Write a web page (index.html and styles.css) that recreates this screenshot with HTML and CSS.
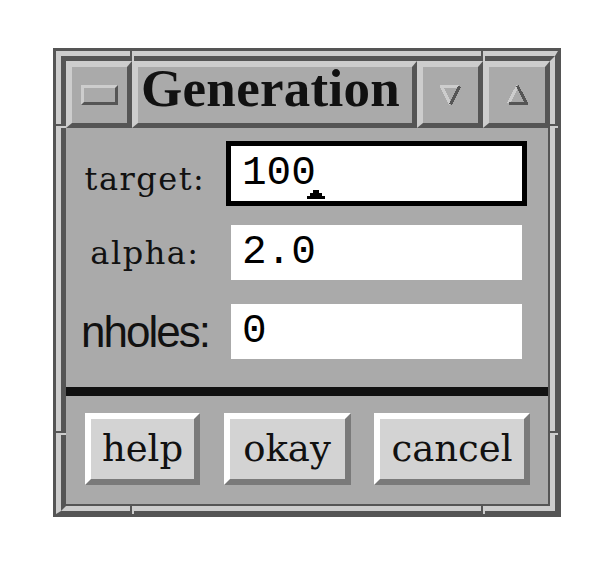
FILE: index.html
```html
<!DOCTYPE html>
<html lang="en">
<head>
    <meta charset="UTF-8">
    <title>Generation</title>
    <link rel="stylesheet" href="styles.css">
</head>
<body>

    <div class="win">
        <div class="bevel-out">
            <div class="bevel-in">
                <div class="titlebar">
                    <div class="tbtn menu-btn"><span class="menu-icon"></span></div>
                    <div class="tbtn title">Generation</div>
                    <div class="tbtn min-btn">
                        <svg width="21" height="20" viewBox="0 0 21 20" shape-rendering="crispEdges">
                            <rect x="0" y="0" width="19" height="3" fill="#cdcdcd"/>
                            <line x1="1.5" y1="1.5" x2="10.5" y2="19.5" stroke="#cdcdcd" stroke-width="3"/>
                            <line x1="19.5" y1="1.5" x2="10.5" y2="19.5" stroke="#555" stroke-width="3"/>
                        </svg>
                    </div>
                    <div class="tbtn max-btn">
                        <svg width="21" height="20" viewBox="0 0 21 20" shape-rendering="crispEdges">
                            <line x1="10.5" y1="1" x2="1.5" y2="18.5" stroke="#cdcdcd" stroke-width="3"/>
                            <line x1="10.5" y1="1" x2="19.5" y2="18.5" stroke="#555" stroke-width="3"/>
                            <rect x="2" y="17" width="19" height="3" fill="#555"/>
                        </svg>
                    </div>
                </div>

                <div class="client">
                    <div class="form">
                        <div class="row">
                            <label class="lbl lbl-low">target:</label>
                            <div class="field focus">
                                <div class="entry">100</div>
                                <svg class="caret" width="18" height="9" viewBox="0 0 18 9" shape-rendering="crispEdges">
                                    <polygon points="6,0 12,0 12,3 15,3 15,6 18,6 18,9 0,9 0,6 3,6 3,3 6,3" fill="#000"/>
                                </svg>
                            </div>
                        </div>
                        <div class="row">
                            <label class="lbl lbl-mid">alpha:</label>
                            <div class="field"><div class="entry">2.0</div></div>
                        </div>
                        <div class="row">
                            <label class="lbl sans">nholes:</label>
                            <div class="field"><div class="entry">0</div></div>
                        </div>
                    </div>

                    <div class="sep"></div>

                    <div class="buttons">
                        <button class="btn help">help</button>
                        <button class="btn okay">okay</button>
                        <button class="btn cancel">cancel</button>
                    </div>
                </div>
            </div>
        </div>

        <!-- resize corner marks on the frame -->
        <span class="notch v n-top-l"></span>
        <span class="notch v n-top-r"></span>
        <span class="notch v n-bot-l"></span>
        <span class="notch v n-bot-r"></span>
        <span class="notch h n-left-t"></span>
        <span class="notch h n-left-b"></span>
        <span class="notch h n-right-t"></span>
        <span class="notch h n-right-b"></span>
    </div>

</body>
</html>
```

FILE: styles.css
```css
body {
    margin: 0;
    background: #fff;
}
.win {
    position: relative;
    box-sizing: border-box;
    width: 508px;
    height: 469px;
    margin: 48px 0 0 53px;
    border: 3px solid #555;
}
.bevel-out {
    box-sizing: border-box;
    height: 100%;
    border-style: solid;
    border-width: 5px 3px 3px 5px;
    border-color: #cdcdcd #555 #555 #cdcdcd;
}
.bevel-in {
    box-sizing: border-box;
    height: 100%;
    border-style: solid;
    border-width: 5px;
    border-color: #555 #cdcdcd #cdcdcd #555;
    display: flex;
    flex-direction: column;
}
.titlebar {
    display: flex;
    height: 67px;
}
.tbtn {
    box-sizing: border-box;
    height: 67px;
    border-style: solid;
    border-width: 6px 5px 5px 6px;
    border-color: #cdcdcd #555 #555 #cdcdcd;
    background: #aaa;
    display: flex;
    align-items: center;
    justify-content: center;
}
.menu-btn {
    width: 66px;
}
.menu-icon {
    box-sizing: border-box;
    width: 37px;
    height: 20px;
    border: 3px solid;
    border-color: #cdcdcd #555 #555 #cdcdcd;
}
.title {
    width: 285px;
    justify-content: flex-start;
    align-items: flex-start;
    padding-left: 3px;
    font: bold 53px/42px "Liberation Serif", serif;
    letter-spacing: 0.3px;
    color: #111;
}
.min-btn {
    width: 66px;
}
.max-btn {
    width: 67px;
}
.client {
    flex: 1;
    background: #aaa;
    border-right: 2px solid #555;
    border-bottom: 2px solid #555;
    display: flex;
    flex-direction: column;
}
.form {
    display: flex;
    flex-direction: column;
    gap: 14px;
    padding: 13px 21px 23px 6px;
}
.row {
    display: flex;
    height: 65px;
}
.lbl {
    width: 146px;
    margin-right: 8px;
    text-align: center;
    font: 32px/65px "DejaVu Serif", serif;
    letter-spacing: 1.5px;
    color: #111;
}
.lbl-low {
    padding-top: 11px;
    line-height: 54px;
}
.lbl-mid {
    padding-top: 1px;
    line-height: 64px;
}
.lbl.sans {
    font: 44px/65px "Liberation Sans", sans-serif;
    letter-spacing: -2px;
}
.field {
    position: relative;
    box-sizing: border-box;
    width: 301px;
    height: 65px;
    border: 5px solid #aaa;
    background: #fff;
}
.field.focus {
    border-color: #000;
}
.entry {
    padding-left: 11px;
    font: 41px/55px "Liberation Mono", monospace;
    color: #000;
}
.caret {
    position: absolute;
    left: 76px;
    top: 44px;
}
.sep {
    height: 9px;
    background: #111;
}
.buttons {
    flex: 1;
    display: flex;
    justify-content: space-between;
    align-items: flex-start;
    padding: 17px 18px 0 19px;
}
.btn {
    box-sizing: border-box;
    height: 72px;
    padding: 0;
    border-style: solid;
    border-width: 6px;
    border-color: #fff #7a7a7a #7a7a7a #fff;
    background: #d3d3d3;
    font: 37px/60px "DejaVu Serif", serif;
    color: #111;
}
.help {
    width: 115px;
}
.okay {
    width: 127px;
}
.cancel {
    width: 156px;
}
.notch {
    position: absolute;
    box-sizing: border-box;
}
.notch.v {
    width: 4px;
    border-left: 2px solid #555;
    border-right: 2px solid #cdcdcd;
}
.notch.h {
    height: 4px;
    border-top: 2px solid #555;
    border-bottom: 2px solid #cdcdcd;
}
.n-top-l { left: 74px; top: 0; height: 10px; }
.n-top-r { left: 425px; top: 0; height: 10px; }
.n-bot-l { left: 74px; top: 455px; height: 8px; }
.n-bot-r { left: 425px; top: 455px; height: 8px; }
.n-left-t { left: 0; top: 73px; width: 10px; }
.n-left-b { left: 0; top: 380px; width: 10px; }
.n-right-t { left: 494px; top: 73px; width: 8px; }
.n-right-b { left: 494px; top: 380px; width: 8px; }
```
